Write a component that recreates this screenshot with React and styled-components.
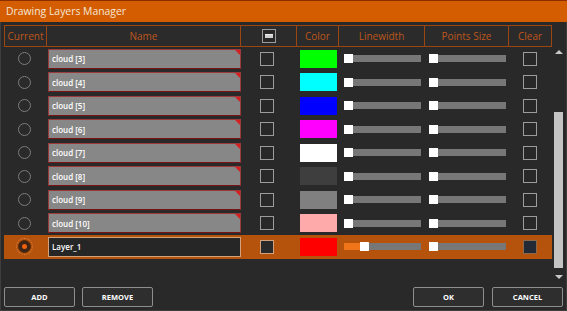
import React from 'react';
import styled, { createGlobalStyle } from 'styled-components';

const Global = createGlobalStyle`
  html, body { margin: 0; padding: 0; background: #292929; }
  body { font-family: "Open Sans", "Noto Sans", sans-serif; }
`;

const COLS = '43px 194px 56px 42px 86px 84px 43px';

const Window = styled.div`
  width: 567px;
  height: 311px;
  box-sizing: border-box;
  border: 1px solid #3e3e3e;
  border-top: none;
  background: #292929;
  display: flex;
  flex-direction: column;
`;

const TitleBar = styled.div`
  height: 22px;
  flex: none;
  background: #d35d00;
  box-shadow: inset 0 1px 0 #8a2e00;
  color: #f6e6d8;
  font-size: 10.4px;
  display: flex;
  align-items: center;
  padding-left: 6px;
  margin: 0 -1px;
`;

const Main = styled.div`
  display: grid;
  grid-template-columns: 548px 14px;
  grid-template-rows: 22px 232px;
  padding: 3px 0 0 3px;
`;

const HeaderRow = styled.div`
  display: grid;
  grid-template-columns: ${COLS};
  height: 22px;
`;

const HeaderCell = styled.div`
  box-sizing: border-box;
  border: 1px solid #9c4712;
  border-left-width: ${p => (p.$first ? '1px' : '0')};
  display: flex;
  align-items: center;
  justify-content: center;
  color: #bf561c;
  font-size: 10px;
  background: #2b2b2b;
`;

const Rows = styled.div`
  display: flex;
  flex-direction: column;
`;

const Row = styled.div`
  display: grid;
  grid-template-columns: ${COLS};
  height: 23.5px;
  align-items: center;
  background: ${p => (p.$selected ? '#b5530d' : 'transparent')};
`;

const Cell = styled.div`
  display: flex;
  align-items: center;
  justify-content: ${p => (p.$center ? 'center' : 'flex-start')};
  padding-left: ${p => p.$pl || 0}px;
  height: 100%;
`;

const Radio = styled.div`
  width: 13px;
  height: 13px;
  box-sizing: border-box;
  border-radius: 50%;
  border: 1px solid ${p => (p.$on ? '#5a2a08' : '#7c7c7c')};
  background: ${p => (p.$on ? '#3a2518' : '#2a2a2a')};
  display: flex;
  align-items: center;
  justify-content: center;
  outline: ${p => (p.$on ? '1px dotted #d9824a' : 'none')};
  outline-offset: 1px;
  margin-left: -2px;
`;

const RadioDot = styled.div`
  width: 5px;
  height: 5px;
  border-radius: 50%;
  background: #f0600a;
`;

const NameField = styled.div`
  position: relative;
  width: 193px;
  height: 20px;
  box-sizing: border-box;
  margin-left: 1px;
  background: ${p => (p.$selected ? '#262626' : '#878787')};
  border: 1px solid ${p => (p.$selected ? '#d2a27c' : '#9a3a3a')};
  border-bottom-color: ${p => (p.$selected ? '#d2a27c' : '#7a1414')};
  color: #ffffff;
  font-size: 8px;
  font-weight: 600;
  display: flex;
  align-items: center;
  padding-left: 3px;
  &::after {
    content: '';
    display: ${p => (p.$selected ? 'none' : 'block')};
    position: absolute;
    top: 0;
    right: 0;
    border-top: 5px solid #d42020;
    border-left: 5px solid transparent;
  }
`;

const Check = styled.div`
  width: 14px;
  height: 14px;
  box-sizing: border-box;
  border: 1px solid ${p => p.$border || '#9c9c9c'};
  background: ${p => p.$bg || '#282828'};
  display: flex;
  align-items: center;
  justify-content: center;
`;

const Minus = styled.div`
  width: 8px;
  height: 4px;
  background: #cfcfcf;
  box-shadow: inset 0 1px 0 #f0f0f0;
`;

const Swatch = styled.div`
  width: 37px;
  height: 18px;
  background: ${p => p.$color};
`;

const Slider = styled.div`
  position: relative;
  width: 77px;
  height: 7px;
  background: #777777;
  display: flex;
`;

const SliderFill = styled.div`
  width: ${p => p.$w}px;
  height: 100%;
  background: #ef7518;
`;

const Thumb = styled.div`
  position: absolute;
  top: -1px;
  left: ${p => p.$x}px;
  width: 9px;
  height: 9px;
  background: #ffffff;
`;

const Scrollbar = styled.div`
  grid-column: 2;
  grid-row: 2;
  display: flex;
  flex-direction: column;
  align-items: center;
  padding-right: 1px;
`;

const ArrowUp = styled.div`
  margin-top: 3px;
  width: 0;
  height: 0;
  border-left: 4px solid transparent;
  border-right: 4px solid transparent;
  border-bottom: 4px solid #c9c9c9;
`;

const ArrowDown = styled.div`
  width: 0;
  height: 0;
  border-left: 4px solid transparent;
  border-right: 4px solid transparent;
  border-top: 4px solid #c9c9c9;
`;

const Track = styled.div`
  flex: 1;
  display: flex;
  flex-direction: column;
`;

const ThumbBar = styled.div`
  margin-top: 58px;
  width: 9px;
  height: 156px;
  background: #c4c4c4;
  margin-bottom: 3px;
`;

const Footer = styled.div`
  margin-top: auto;
  display: flex;
  justify-content: space-between;
  padding: 0 3px 3px 3px;
`;

const ButtonGroup = styled.div`
  display: flex;
  gap: ${p => p.$gap}px;
`;

const Button = styled.button`
  width: 71px;
  height: 20px;
  box-sizing: border-box;
  border: 1px solid #8e8e8e;
  border-radius: 2px;
  background: #2e2e2e;
  color: #ffffff;
  font-family: "Open Sans", "Noto Sans", sans-serif;
  font-weight: 700;
  font-size: 7.5px;
  padding: 0;
`;

const layers = [
  { name: 'cloud [3]', color: '#00ff00' },
  { name: 'cloud [4]', color: '#00ffff' },
  { name: 'cloud [5]', color: '#0000ff' },
  { name: 'cloud [6]', color: '#ff00ff' },
  { name: 'cloud [7]', color: '#ffffff' },
  { name: 'cloud [8]', color: '#3e3e3e' },
  { name: 'cloud [9]', color: '#808080' },
  { name: 'cloud [10]', color: '#ffaaaa' },
  { name: 'Layer_1', color: '#ff0000', selected: true },
];

export default function App() {
  return (
    <>
      <Global />
      <Window>
        <TitleBar>Drawing Layers Manager</TitleBar>
        <Main>
          <HeaderRow>
            <HeaderCell $first>Current</HeaderCell>
            <HeaderCell>Name</HeaderCell>
            <HeaderCell>
              <Check><Minus /></Check>
            </HeaderCell>
            <HeaderCell>Color</HeaderCell>
            <HeaderCell>Linewidth</HeaderCell>
            <HeaderCell>Points Size</HeaderCell>
            <HeaderCell>Clear</HeaderCell>
          </HeaderRow>
          <div />
          <Rows>
            {layers.map(l => (
              <Row key={l.name} $selected={l.selected}>
                <Cell $center>
                  <Radio $on={l.selected}>{l.selected && <RadioDot />}</Radio>
                </Cell>
                <Cell>
                  <NameField $selected={l.selected}>{l.name}</NameField>
                </Cell>
                <Cell $pl={19}>
                  <Check $border={l.selected ? '#d2a27c' : undefined} $bg={l.selected ? '#2a2a2a' : undefined} />
                </Cell>
                <Cell $pl={3}>
                  <Swatch $color={l.color} />
                </Cell>
                <Cell $pl={5}>
                  <Slider>
                    {l.selected && <SliderFill $w={16} />}
                    <Thumb $x={l.selected ? 16 : 0} />
                  </Slider>
                </Cell>
                <Cell $pl={4}>
                  <Slider>
                    <Thumb $x={0} />
                  </Slider>
                </Cell>
                <Cell $pl={14}>
                  <Check $border={l.selected ? '#8a6a4a' : undefined} $bg={l.selected ? '#232a36' : undefined} />
                </Cell>
              </Row>
            ))}
          </Rows>
          <Scrollbar>
            <ArrowUp />
            <Track>
              <ThumbBar />
            </Track>
            <ArrowDown />
          </Scrollbar>
        </Main>
        <Footer>
          <ButtonGroup $gap={7}>
            <Button>ADD</Button>
            <Button>REMOVE</Button>
          </ButtonGroup>
          <ButtonGroup $gap={8}>
            <Button>OK</Button>
            <Button>CANCEL</Button>
          </ButtonGroup>
        </Footer>
      </Window>
    </>
  );
}
